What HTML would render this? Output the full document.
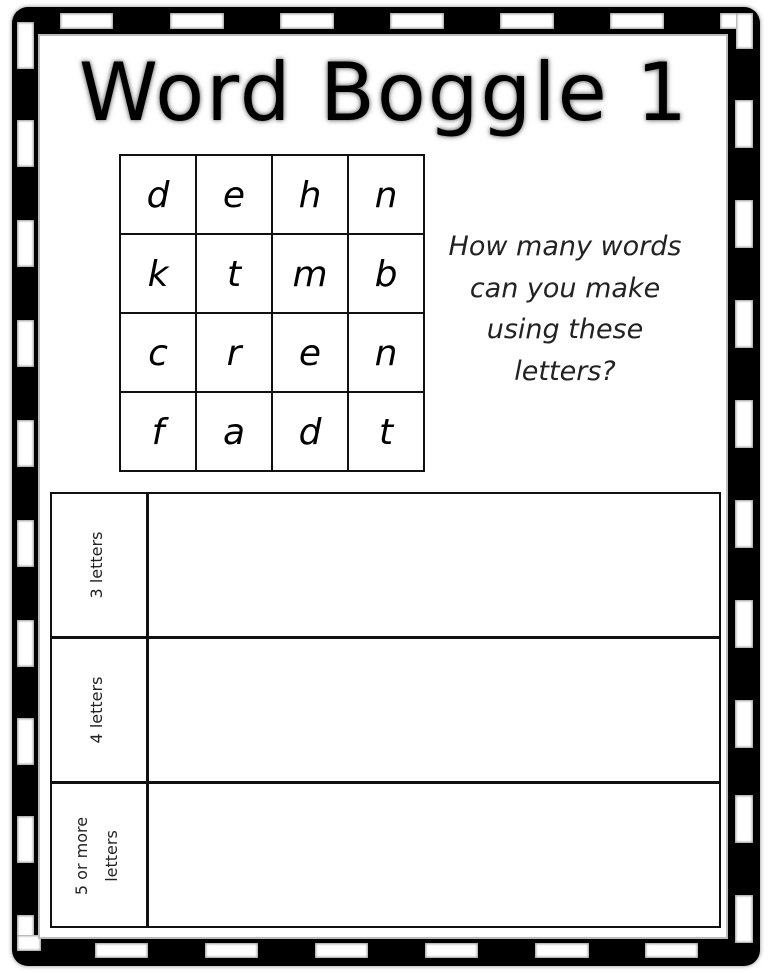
<!DOCTYPE html>
<html><head><meta charset="utf-8"><style>
*{margin:0;padding:0;box-sizing:border-box}
body{width:768px;height:973px;background:#fff;position:relative;overflow:hidden;font-family:"DejaVu Sans","Liberation Sans",sans-serif}
.a{position:absolute}
.outer{left:12px;top:7px;width:748px;height:959px;background:#000;border-radius:16px;box-shadow:0 0 4px #888}
.inner{left:40px;top:36px;width:686px;height:901px;background:#fff;box-shadow:0 0 0 2px #bbb}
.d{position:absolute;background:#fff;box-shadow:0 0 2px 1px #999 inset}
.title{left:0;width:768px;top:38px;text-align:center;font-size:80px;line-height:110px;letter-spacing:2px;color:#000;text-shadow:0 0 6px #777,0 0 3px #999;font-family:"DejaVu Sans",sans-serif;font-weight:normal}
table.g{position:absolute;left:119px;top:154px;border-collapse:collapse}
table.g td{width:76px;height:79px;border:2.5px solid #111;text-align:center;font-size:36px;font-style:oblique;font-family:"DejaVu Sans",sans-serif;padding-top:2px}
.q{left:430px;width:270px;top:226px;text-align:center;font-size:27px;line-height:41.5px;font-style:italic;font-family:"DejaVu Sans",sans-serif;font-weight:300;color:#222}
.t{left:50px;top:492px;width:671px;height:436px;border:2.5px solid #111}
.h{position:absolute;left:0;width:100%;height:2.5px;background:#111}
.v{position:absolute;left:94px;top:0;width:2.5px;height:100%;background:#111}
.lab{position:absolute;font-size:16px;color:#222;transform:rotate(-90deg);white-space:nowrap;text-align:center;line-height:30px}
</style></head><body>
<div class="a outer"></div>
<div class="d" style="left:60px;top:13px;width:53px;height:16px"></div>
<div class="d" style="left:170px;top:13px;width:54px;height:16px"></div>
<div class="d" style="left:280px;top:13px;width:54px;height:16px"></div>
<div class="d" style="left:390px;top:13px;width:54px;height:16px"></div>
<div class="d" style="left:500px;top:13px;width:54px;height:16px"></div>
<div class="d" style="left:610px;top:13px;width:54px;height:16px"></div>
<div class="d" style="left:720px;top:13px;width:33px;height:16px"></div>
<div class="d" style="left:736px;top:13px;width:17px;height:36px"></div>
<div class="d" style="left:17px;top:22px;width:17px;height:47px"></div>
<div class="d" style="left:17px;top:120px;width:17px;height:47px"></div>
<div class="d" style="left:17px;top:220px;width:17px;height:47px"></div>
<div class="d" style="left:17px;top:320px;width:17px;height:47px"></div>
<div class="d" style="left:17px;top:420px;width:17px;height:47px"></div>
<div class="d" style="left:17px;top:520px;width:17px;height:47px"></div>
<div class="d" style="left:17px;top:620px;width:17px;height:47px"></div>
<div class="d" style="left:17px;top:718px;width:17px;height:47px"></div>
<div class="d" style="left:17px;top:816px;width:17px;height:47px"></div>
<div class="d" style="left:17px;top:915px;width:17px;height:36px"></div>
<div class="d" style="left:17px;top:935px;width:24px;height:16px"></div>
<div class="d" style="left:735px;top:100px;width:18px;height:48px"></div>
<div class="d" style="left:735px;top:200px;width:18px;height:48px"></div>
<div class="d" style="left:735px;top:300px;width:18px;height:48px"></div>
<div class="d" style="left:735px;top:400px;width:18px;height:48px"></div>
<div class="d" style="left:735px;top:500px;width:18px;height:48px"></div>
<div class="d" style="left:735px;top:600px;width:18px;height:48px"></div>
<div class="d" style="left:735px;top:700px;width:18px;height:48px"></div>
<div class="d" style="left:735px;top:795px;width:18px;height:48px"></div>
<div class="d" style="left:735px;top:895px;width:18px;height:48px"></div>
<div class="d" style="left:95px;top:943px;width:53px;height:15px"></div>
<div class="d" style="left:205px;top:943px;width:53px;height:15px"></div>
<div class="d" style="left:315px;top:943px;width:53px;height:15px"></div>
<div class="d" style="left:425px;top:943px;width:53px;height:15px"></div>
<div class="d" style="left:535px;top:943px;width:54px;height:15px"></div>
<div class="d" style="left:645px;top:943px;width:53px;height:15px"></div>
<div class="a inner"></div>
<div class="a title">Word Boggle 1</div>
<table class="g">
<tr><td>d</td><td>e</td><td>h</td><td>n</td></tr>
<tr><td>k</td><td>t</td><td>m</td><td>b</td></tr>
<tr><td>c</td><td>r</td><td>e</td><td>n</td></tr>
<tr><td>f</td><td>a</td><td>d</td><td>t</td></tr>
</table>
<div class="a q">How many words<br>can you make<br>using these<br>letters?</div>
<div class="a t">
<div class="h" style="top:142px"></div>
<div class="h" style="top:287px"></div>
<div class="v"></div>
<div class="lab" style="left:-5px;top:56px;width:100px">3 letters</div>
<div class="lab" style="left:-5px;top:201px;width:100px">4 letters</div>
<div class="lab" style="left:-5px;top:332px;width:100px">5 or more<br>letters</div>
</div>
</body></html>
